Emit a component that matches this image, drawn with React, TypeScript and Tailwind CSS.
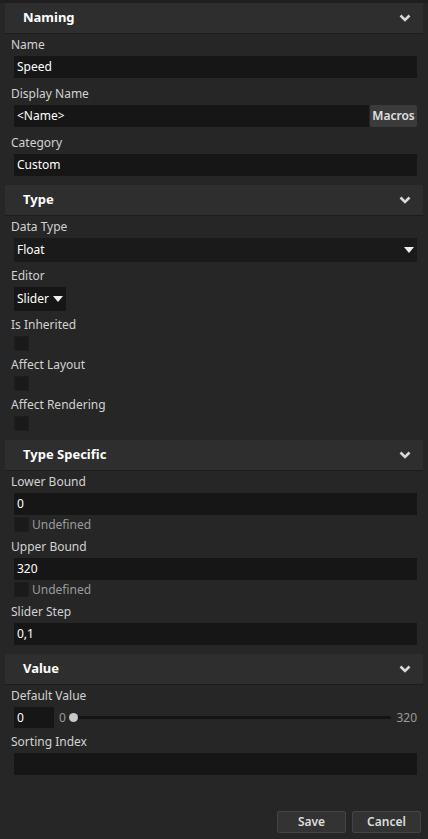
import type { ReactNode } from "react";

function Chevron() {
  return (
    <svg width="12" height="8" viewBox="0 0 12 8" aria-hidden>
      <path d="M1.5 1.5 6 6l4.5-4.5" fill="none" stroke="#d8d8d8" strokeWidth={2.6} strokeLinejoin="miter" />
    </svg>
  );
}

function Triangle() {
  return (
    <svg width="10" height="6" viewBox="0 0 10 6" aria-hidden>
      <path d="M0 0h10L5 6z" fill="#f0f0f0" />
    </svg>
  );
}

function Section({ title, children }: { title: string; children: ReactNode }) {
  return (
    <section>
      <header className="mx-[5px] flex h-[31px] items-center justify-between border-b border-[#1c1c1c] bg-[#2e2e2e] pl-[18px] pr-[12px]">
        <h2 className="text-[13px] font-bold text-white">{title}</h2>
        <Chevron />
      </header>
      <div className="px-[11px] pb-[9px] [&>*:last-child]:mb-0">{children}</div>
    </section>
  );
}

function Label({ children }: { children: ReactNode }) {
  return <p className="h-[22px] leading-[22px] text-[#d2d2d2]">{children}</p>;
}

function Field({ value = "" }: { value?: string }) {
  return (
    <div className="mb-[5px] ml-[3px] flex h-[22px] items-center bg-[#161616] px-[3px] text-white">
      {value}
    </div>
  );
}

// checkbox directly below an input sits 2px under it
function Check({ label }: { label?: string }) {
  return (
    <div
      className={
        label
          ? "-mt-[3px] mb-[4px] ml-[3px] flex h-[15px] items-center gap-[3px]"
          : "mb-[3px] ml-[3px] flex h-[15px] items-center gap-[3px]"
      }
    >
      <span className="h-[15px] w-[15px] border border-[#1e1e1e] bg-[#1a1a1a]" />
      {label && <span className="text-[#9a9a9a]">{label}</span>}
    </div>
  );
}

export default function App() {
  return (
    <div
      className="min-h-[839px] border-t-[3px] border-[#1f1f1f] bg-[#262626] text-[12px]"
      style={{ fontFamily: '"Noto Sans", "Open Sans", sans-serif' }}
    >
      <Section title="Naming">
        <Label>Name</Label>
        <Field value="Speed" />
        <Label>Display Name</Label>
        <div className="mb-[5px] flex items-center gap-[1px]">
          <div className="flex-1 [&>*]:mb-0">
            <Field value="<Name>" />
          </div>
          <button className="h-[22px] w-[47px] rounded-[2px] bg-[#3b3b3b] text-[12px] font-semibold text-[#e0e0e0]">
            Macros
          </button>
        </div>
        <Label>Category</Label>
        <Field value="Custom" />
      </Section>

      <Section title="Type">
        <Label>Data Type</Label>
        <div className="mb-[3px] ml-[3px] flex h-[24px] items-center justify-between bg-[#1a1a1a] pl-[3px] pr-[3px] text-white">
          <span>Float</span>
          <Triangle />
        </div>
        <Label>Editor</Label>
        <div className="mb-[3px] ml-[3px] flex h-[24px] w-[52px] items-center justify-between bg-[#161616] px-[3px] text-white">
          <span>Slider</span>
          <Triangle />
        </div>
        <Label>Is Inherited</Label>
        <Check />
        <Label>Affect Layout</Label>
        <Check />
        <Label>Affect Rendering</Label>
        <Check />
      </Section>

      <Section title="Type Specific">
        <Label>Lower Bound</Label>
        <Field value="0" />
        <Check label="Undefined" />
        <Label>Upper Bound</Label>
        <Field value="320" />
        <Check label="Undefined" />
        <Label>Slider Step</Label>
        <Field value="0,1" />
      </Section>

      <Section title="Value">
        <Label>Default Value</Label>
        <div className="mb-[3px] flex items-center">
          <div className="ml-[3px] flex h-[21px] w-[40px] items-center bg-[#161616] px-[3px] text-white">0</div>
          <span className="ml-[5px] text-[#9a9a9a]">0</span>
          <div className="relative ml-[3px] flex h-[10px] flex-1 items-center">
            <div className="h-[3px] w-full rounded-full bg-[#141414]" />
            <span className="absolute left-0 h-[9px] w-[9px] rounded-full bg-[#c8c8c8]" />
          </div>
          <span className="ml-[5px] text-[#9a9a9a]">320</span>
        </div>
        <Label>Sorting Index</Label>
        <Field />
      </Section>

      <div className="mt-[27px] flex justify-end gap-[6px] pr-[7px]">
        <button className="h-[22px] w-[69px] rounded-[2px] border border-[#444] bg-[#333] text-[12px] font-semibold text-[#dcdcdc]">
          Save
        </button>
        <button className="h-[22px] w-[69px] rounded-[2px] border border-[#444] bg-[#333] text-[12px] font-semibold text-[#dcdcdc]">
          Cancel
        </button>
      </div>
    </div>
  );
}
